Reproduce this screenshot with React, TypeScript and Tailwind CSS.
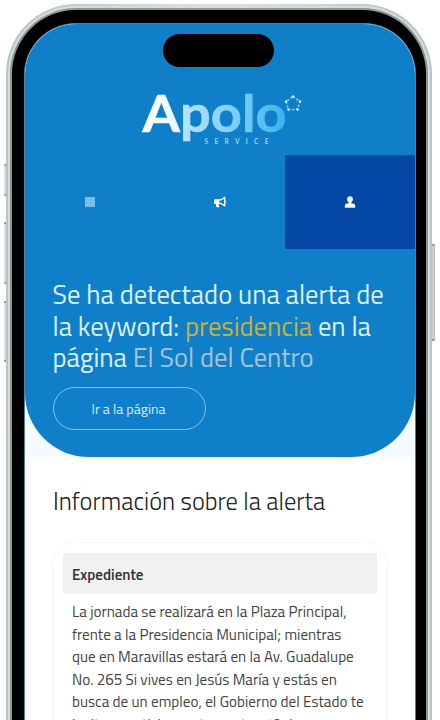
import React from "react";
import { FaBullhorn } from "react-icons/fa";

const body: string[] = [
  "La jornada se realizará en la Plaza Principal,",
  "frente a la Presidencia Municipal; mientras",
  "que en Maravillas estará en la Av. Guadalupe",
  "No. 265 Si vives en Jesús María y estás en",
  "busca de un empleo, el Gobierno del Estado te",
  "invita a participar este martes 10 de",
];

function SideButton({ className }: { className: string }) {
  return (
    <div
      className={`absolute w-[5px] rounded-[1px] border-y-2 border-[#9a9fa2] bg-linear-to-r from-[#e3e6e8] to-[#b5bcc0] ${className}`}
    />
  );
}

function Logo() {
  return (
    <svg className="block h-[80px] w-[180px] overflow-visible" viewBox="0 0 180 80">
      <defs>
        <linearGradient id="word" gradientUnits="userSpaceOnUse" x1="8" y1="0" x2="151" y2="0">
          <stop offset="0" stopColor="#ffffff" />
          <stop offset="0.25" stopColor="#e9f7fe" />
          <stop offset="0.3" stopColor="#b4e3fa" />
          <stop offset="0.75" stopColor="#6cc9f4" />
          <stop offset="1" stopColor="#35b4ed" />
        </linearGradient>
      </defs>
      <text x="8.500" y="56" textLength="144" lengthAdjust="spacingAndGlyphs" fill="url(#word)" stroke="url(#word)" strokeWidth="0.600" className="font-[Lato,sans-serif] text-[52px] font-bold">
        Apolo
      </text>
      <text x="70.500" y="67.500" textLength="64" fill="#9fd2f1" className="font-[Lato,sans-serif] text-[6.5px] font-bold">
        SERVICE
      </text>
      <g fill="none" stroke="#9bd3f3" strokeWidth="1.500" strokeDasharray="2.200 1.800">
        <path d="M159 20.500 L166 25.500 L163.500 33.500 L154.500 33.500 L152 25.500 Z" />
      </g>
      <g fill="#e4f4fd">
        <circle cx="159" cy="20.500" r="1.200" />
        <circle cx="166" cy="25.500" r="1.200" />
        <circle cx="163.500" cy="33.500" r="1.200" />
        <circle cx="154.500" cy="33.500" r="1.200" />
        <circle cx="152" cy="25.500" r="1.200" />
      </g>
    </svg>
  );
}

function MenuIcon() {
  return (
    <svg className="size-[10px]" viewBox="0 0 10 10">
      <rect width="10" height="10" fill="#74b7e4" />
      <path d="M0 1.500H10M0 4.500H10M0 7.500H10" stroke="#8ac3e9" strokeWidth="1" />
    </svg>
  );
}

function PersonIcon() {
  return (
    <svg className="size-[12px]" viewBox="0 0 12 12" fill="#eef5fd">
      <circle cx="6" cy="3.200" r="2.900" />
      <path d="M4.500 5h3v2.500h1.500c1.500 0 2.200 1 2.200 2.200v2H.8v-2C.8 8.500 1.500 7.500 3 7.500h1.500Z" />
    </svg>
  );
}

export default function App() {
  return (
    <div className="relative h-[720px] w-[440px] overflow-hidden bg-white font-[Titillium_Web,Roboto,sans-serif]">
      <SideButton className="left-[4px] top-[164px] h-[32px]" />
      <SideButton className="left-[4px] top-[222px] h-[62px]" />
      <SideButton className="left-[4px] top-[301px] h-[61px]" />
      <SideButton className="left-[430px] top-[244px] h-[97px]" />
      <div className="relative ml-[6px] mt-[4px] h-[900px] w-[426px] rounded-t-[70px] bg-linear-to-r from-[#b8c3c5] via-[#dce1e0] to-[#b8c3c8] p-[2px]">
        <div className="h-full rounded-t-[68px] bg-[#d5dddd] p-[2px]">
          <div className="h-full rounded-t-[66px] bg-[#8d9598] px-[2px] pt-[2px]">
            <div className="h-full rounded-t-[64px] bg-black pl-[12px] pr-[10px] pt-[13px]">
              <main className="relative h-full overflow-hidden rounded-t-[52px] border-l border-r border-t border-[#527e99] bg-white">
                <div className="bg-[#f6fbff]">
                  <header className="h-[433px] rounded-b-[64px] bg-[#107fca]">
                    <div className="mx-auto h-[33px] w-[111px] -translate-x-[2px] translate-y-[10px] rounded-full bg-black" />
                    <div className="ml-[109px] mt-[19px]">
                      <Logo />
                    </div>
                    <nav className="-mt-[1px] grid h-[94px] grid-cols-3 text-white">
                      <div className="grid place-items-center">
                        <MenuIcon />
                      </div>
                      <div className="grid place-items-center">
                        <FaBullhorn className="size-[12px]" />
                      </div>
                      <div className="grid place-items-center bg-[#0547a7]">
                        <PersonIcon />
                      </div>
                    </nav>
                    <h1 className="ml-[27.500px] mt-[30px] whitespace-nowrap text-[26.600px] font-normal leading-[31.500px] text-[#dcf0fb]">
                      <span className="block">Se ha detectado una alerta de</span>
                      <span className="block">
                        la keyword: <span className="text-[#c8b03a]">presidencia</span> en la
                      </span>
                      <span className="block">
                        página <span className="text-[#a9c2d3]">El Sol del Centro</span>
                      </span>
                    </h1>
                    <button className="ml-[28px] mt-[13px] block h-[43px] w-[153px] rounded-full border border-[#8bc4e9] pr-[2px] text-[14px] text-[#d3eafa]">
                      Ir a la página
                    </button>
                  </header>
                </div>
                <h2 className="ml-[28px] mt-[28px] text-[24.500px] font-light leading-[32px] text-[#222]">
                  Información sobre la alerta
                </h2>
                <section className="ml-[28px] mt-[25px] h-[300px] w-[334px] rounded-[22px] border border-[#f5f5f5] px-[9px] pt-[10px]">
                  <h3 className="h-[41px] bg-[#f1f1f1] pl-[9px] text-[15px] font-semibold leading-[43px] text-[#333]">Expediente</h3>
                  <div className="pl-[9px] pt-[7px] text-[15.150px] leading-[22.500px] text-[#444]">
                    {body.map((line) => (
                      <p key={line} className="whitespace-nowrap">
                        {line}
                      </p>
                    ))}
                  </div>
                </section>
              </main>
            </div>
          </div>
        </div>
      </div>
    </div>
  );
}
